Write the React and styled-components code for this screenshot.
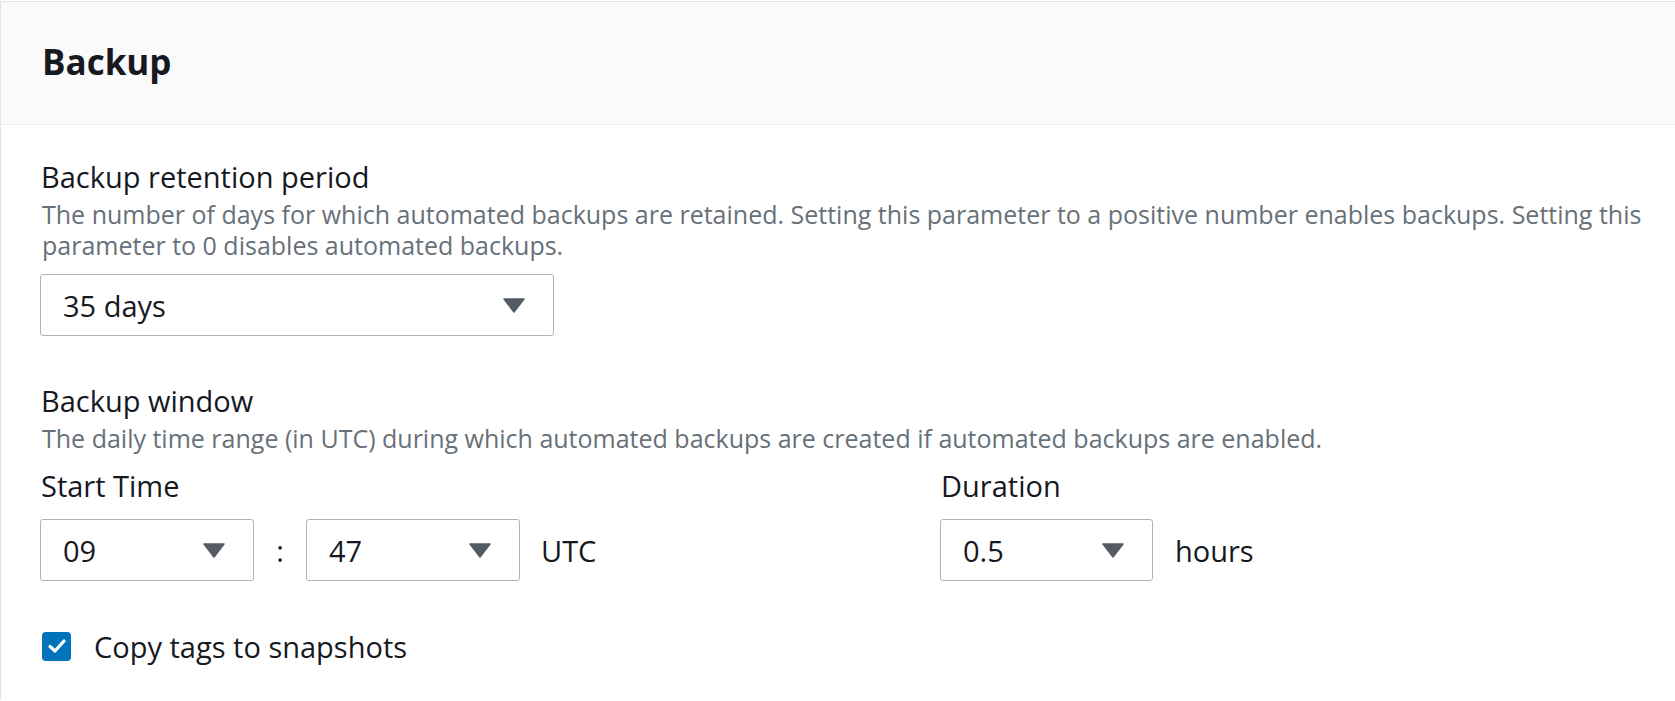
import styled, { createGlobalStyle } from "styled-components";

const GlobalStyle = createGlobalStyle`
  body {
    margin: 0;
    background: #ffffff;
    font-family: "Open Sans", "Noto Sans", sans-serif;
    color: #16191f;
  }
`;

const Panel = styled.div`
  margin-top: 1px;
  border-top: 1px solid #e3e5e5;
  border-left: 1px solid #e3e5e5;
  min-height: 699px;
  box-sizing: border-box;
`;

const Header = styled.div`
  height: 123px;
  box-sizing: border-box;
  padding: 0 0 4px 41px;
  background: #fafafa;
  border-bottom: 1px solid #eaeded;
  display: flex;
  align-items: center;
`;

const Title = styled.h2`
  margin: 0;
  font-size: 35px;
  font-weight: 700;
  color: #16191f;
`;

const Body = styled.div`
  padding: 31px 20px 0 39px;
  display: flex;
  flex-direction: column;
`;

const Field = styled.div`
  display: flex;
  flex-direction: column;
  margin-bottom: ${(p) => p.$gap || 0}px;
`;

const Label = styled.div`
  font-size: 29px;
  line-height: 42px;
  font-weight: 500;
  color: #16191f;
  padding-left: 1px;
`;

const Desc = styled.div`
  font-size: 25px;
  line-height: 31px;
  color: #687078;
  margin: 1px 0 ${(p) => p.$after}px;
  padding-left: 2px;
`;

const SelectBox = styled.div`
  width: ${(p) => p.$width}px;
  height: 62px;
  box-sizing: border-box;
  border: 1px solid #aab7b8;
  border-radius: 3px;
  display: flex;
  align-items: center;
  justify-content: space-between;
  padding: 0 28px 0 22px;
  font-size: 29px;
  color: #16191f;
  background: #fff;
  flex-shrink: 0;
`;

const Arrow = styled.svg`
  width: 22px;
  height: 15px;
  fill: #545b64;
`;

const TimeRow = styled.div`
  display: flex;
  align-items: flex-end;
`;

const TimeGroup = styled.div`
  display: flex;
  flex-direction: column;
  width: ${(p) => (p.$width ? `${p.$width}px` : "auto")};
`;

const Inline = styled.div`
  display: flex;
  align-items: center;
  margin-top: 12px;
`;

const Sep = styled.span`
  font-size: 29px;
  width: 52px;
  text-align: center;
`;

const Unit = styled.span`
  font-size: 29px;
  margin-left: ${(p) => p.$gap}px;
`;

const CheckRow = styled.label`
  display: flex;
  align-items: center;
  margin-top: 44px;
  height: 42px;
  font-size: 29px;
  color: #16191f;
`;

const Check = styled.span`
  width: 29px;
  height: 29px;
  border-radius: 4px;
  background: #0073bb;
  display: flex;
  align-items: center;
  justify-content: center;
  margin: 0 23px 0 2px;
`;

function Select({ value, width }) {
  return (
    <SelectBox $width={width}>
      <span>{value}</span>
      <Arrow viewBox="0 0 22 15">
        <path d="M1 1 H21 L11 14 Z" strokeLinejoin="round" stroke="#545b64" strokeWidth="1.5" />
      </Arrow>
    </SelectBox>
  );
}

export default function App() {
  return (
    <>
      <GlobalStyle />
      <Panel>
        <Header>
          <Title>Backup</Title>
        </Header>
        <Body>
          <Field $gap={44}>
            <Label>Backup retention period</Label>
            <Desc $after={13}>
              The number of days for which automated backups are retained. Setting this parameter to a positive number
              enables backups. Setting this parameter to 0 disables automated backups.
            </Desc>
            <Select value="35 days" width={514} />
          </Field>
          <Field>
            <Label>Backup window</Label>
            <Desc $after={11}>
              The daily time range (in UTC) during which automated backups are created if automated backups are enabled.
            </Desc>
            <TimeRow>
              <TimeGroup $width={900}>
                <Label>Start Time</Label>
                <Inline>
                  <Select value="09" width={214} />
                  <Sep>:</Sep>
                  <Select value="47" width={214} />
                  <Unit $gap={21}>UTC</Unit>
                </Inline>
              </TimeGroup>
              <TimeGroup>
                <Label>Duration</Label>
                <Inline>
                  <Select value="0.5" width={213} />
                  <Unit $gap={22}>hours</Unit>
                </Inline>
              </TimeGroup>
            </TimeRow>
          </Field>
          <CheckRow>
            <Check>
              <svg width="20" height="16" viewBox="0 0 20 16">
                <path
                  d="M3 8.5 L8 13 L17 3"
                  fill="none"
                  stroke="#fff"
                  strokeWidth="3.2"
                  strokeLinecap="round"
                  strokeLinejoin="round"
                />
              </svg>
            </Check>
            Copy tags to snapshots
          </CheckRow>
        </Body>
      </Panel>
    </>
  );
}
